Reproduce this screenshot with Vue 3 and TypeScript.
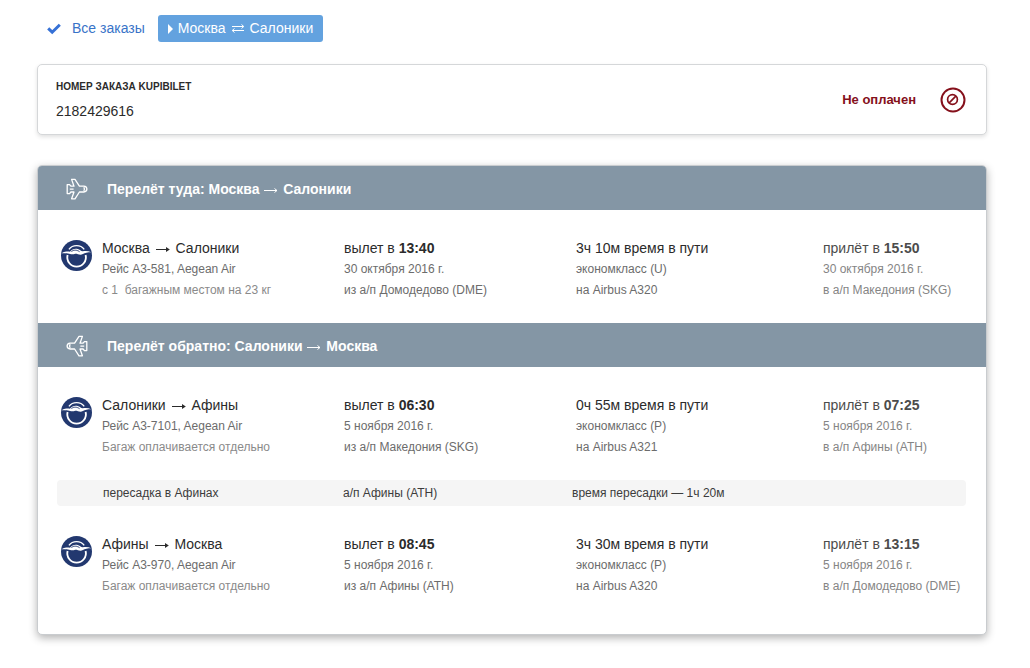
<script setup lang="ts">
interface Flight {
  from: string
  to: string
  code: string
  baggage: string
  departTime: string
  departDate: string
  departAirport: string
  duration: string
  cabin: string
  aircraft: string
  arriveTime: string
  arriveDate: string
  arriveAirport: string
  transfer?: { place: string; airport: string; time: string }
}

interface Trip {
  label: string
  from: string
  to: string
  back: boolean
  flights: Flight[]
}

const orderNumber = '2182429616'

const trips: Trip[] = [
  {
    label: 'Перелёт туда:',
    from: 'Москва',
    to: 'Салоники',
    back: false,
    flights: [
      {
        from: 'Москва',
        to: 'Салоники',
        code: 'A3-581',
        baggage: 'с 1\u00a0 багажным местом на 23 кг',
        departTime: '13:40',
        departDate: '30 октября 2016 г.',
        departAirport: 'Домодедово (DME)',
        duration: '3ч 10м',
        cabin: 'экономкласс (U)',
        aircraft: 'Airbus A320',
        arriveTime: '15:50',
        arriveDate: '30 октября 2016 г.',
        arriveAirport: 'Македония (SKG)',
      },
    ],
  },
  {
    label: 'Перелёт обратно:',
    from: 'Салоники',
    to: 'Москва',
    back: true,
    flights: [
      {
        from: 'Салоники',
        to: 'Афины',
        code: 'A3-7101',
        baggage: 'Багаж оплачивается отдельно',
        departTime: '06:30',
        departDate: '5 ноября 2016 г.',
        departAirport: 'Македония (SKG)',
        duration: '0ч 55м',
        cabin: 'экономкласс (P)',
        aircraft: 'Airbus A321',
        arriveTime: '07:25',
        arriveDate: '5 ноября 2016 г.',
        arriveAirport: 'Афины (ATH)',
        transfer: {
          place: 'пересадка в Афинах',
          airport: 'а/п Афины (ATH)',
          time: 'время пересадки — 1ч 20м',
        },
      },
      {
        from: 'Афины',
        to: 'Москва',
        code: 'A3-970',
        baggage: 'Багаж оплачивается отдельно',
        departTime: '08:45',
        departDate: '5 ноября 2016 г.',
        departAirport: 'Афины (ATH)',
        duration: '3ч 30м',
        cabin: 'экономкласс (P)',
        aircraft: 'Airbus A320',
        arriveTime: '13:15',
        arriveDate: '5 ноября 2016 г.',
        arriveAirport: 'Домодедово (DME)',
      },
    ],
  },
]
</script>

<template>
  <main class="page">
    <nav class="crumbs">
      <a class="all" href="#orders">
        <svg class="check" viewBox="0 0 14 12" aria-hidden="true">
          <path d="M1.2 5.4 5.2 9.2 12.8 1.8" />
        </svg>
        <span>Все заказы</span>
      </a>
      <a class="current" href="#order">
        <svg class="caret" viewBox="0 0 5 10" aria-hidden="true"><path d="M0 0 5 5 0 10z" /></svg>
        <span>Москва</span>
        <svg class="swap" viewBox="0 0 14 10" aria-hidden="true">
          <path d="M1 2.5H12.5M10.5 .5 12.8 2.5 10.5 4.5M13 6.5H1.5M3.5 4.5 1.2 6.5 3.5 8.5" />
        </svg>
        <span>Салоники</span>
      </a>
    </nav>

    <section class="card order">
      <div class="order-info">
        <h1>НОМЕР ЗАКАЗА KUPIBILET</h1>
        <p>{{ orderNumber }}</p>
      </div>
      <strong class="status">Не оплачен</strong>
      <svg class="ban" viewBox="0 0 26 26" aria-hidden="true">
        <circle cx="13" cy="13" r="11.5" stroke-width="2" />
        <circle cx="12.5" cy="12.5" r="4.9" stroke-width="1.7" />
        <path d="M9.2 15.8 15.8 9.2" stroke-width="1.7" />
      </svg>
    </section>

    <article class="card trips">
      <section v-for="trip in trips" :key="trip.label" class="trip">
        <header class="trip-head">
          <svg class="plane" :class="{ back: trip.back }" viewBox="0 0 22 22" aria-hidden="true">
            <path
              d="M1.2 6.6H3.6L4.9 8.2H8L5.6 1.4H9L13.4 8.2H17.8C19.8 8.4 20.9 9.8 20.9 11.1S19.8 13.8 17.8 14H13.4L9 20.8H5.6L8 14H4.9L3.6 15.6H1.2V6.6ZM17.6 9.4C18.7 10.2 18.7 12 17.6 12.8M3.8 11.1H7.6"
            />
          </svg>
          <h2>
            {{ trip.label }} {{ trip.from }}
            <svg class="arrow head-arrow" viewBox="0 0 14 8" aria-hidden="true">
              <path d="M0 4.5H13M10.5 2.5 13 4.5 10.5 6.5" />
            </svg>
            {{ trip.to }}
          </h2>
        </header>

        <template v-for="flight in trip.flights" :key="flight.code">
          <div class="flight">
            <svg class="logo" viewBox="0 0 32 32" aria-hidden="true">
              <circle class="disc" cx="16" cy="16" r="16" />
              <path class="ring" d="M6.8 15.5A9.6 9.6 0 1 0 25.4 15.5" />
              <path class="ring top" d="M8.2 9.6C12 4.6 20.2 4.6 24 9.6" />
              <path
                class="wing"
                d="M0.6 13.6C4 11.8 7 11.9 9.2 12.1 11.4 9.2 14.6 8.4 17.2 9.2 19.2 9.8 20.6 11.2 22.4 11.6 25.6 10.9 28.4 11.2 31.2 12.6 27.4 12.7 24.8 13 22.6 14.4 19.6 16.3 16.8 13.8 14 14.4 10.6 15.4 8.6 13.2 0.6 13.6Z"
              />
              <path class="cut" d="M10.8 11.9C13.4 9.9 16.6 10.2 19.2 12.1" />
            </svg>
            <div class="col">
              <h3>
                {{ flight.from }}
                <svg class="arrow" viewBox="0 0 14 8" aria-hidden="true">
                  <path d="M0 4.5H12" />
                  <path class="tip" d="M10 2 13.8 4.5 10 7z" />
                </svg>
                {{ flight.to }}
              </h3>
              <p>Рейс {{ flight.code }}, Aegean Air</p>
              <p class="light">{{ flight.baggage }}</p>
            </div>
            <div class="col">
              <h3>вылет в <b>{{ flight.departTime }}</b></h3>
              <p>{{ flight.departDate }}</p>
              <p>из а/п {{ flight.departAirport }}</p>
            </div>
            <div class="col">
              <h3>{{ flight.duration }} время в пути</h3>
              <p>{{ flight.cabin }}</p>
              <p>на {{ flight.aircraft }}</p>
            </div>
            <div class="col arrival">
              <h3>прилёт в <b>{{ flight.arriveTime }}</b></h3>
              <p>{{ flight.arriveDate }}</p>
              <p>в а/п {{ flight.arriveAirport }}</p>
            </div>
          </div>
          <div v-if="flight.transfer" class="transfer">
            <span>{{ flight.transfer.place }}</span>
            <span>{{ flight.transfer.airport }}</span>
            <span>{{ flight.transfer.time }}</span>
          </div>
        </template>
      </section>
    </article>
  </main>
</template>

<style>
body {
  background: #fff;
}
</style>

<style scoped>
.page {
  box-sizing: border-box;
  padding: 15px 43px 32px 37px;
  font-family: "Liberation Sans", Arial, sans-serif;
  font-size: 14px;
  color: #2b2b2b;
}

h1,
h2,
h3,
p {
  margin: 0;
}

svg {
  fill: none;
  flex: none;
}

.crumbs {
  display: flex;
  align-items: center;
  gap: 13px;
  padding-left: 10px;
}

.crumbs a {
  display: flex;
  align-items: center;
  line-height: 27px;
  text-decoration: none;
}

.all {
  gap: 11px;
  color: #3873c8;
}

.check {
  width: 14px;
  height: 12px;
  stroke: #3671d6;
  stroke-width: 3;
}

.current {
  gap: 5px;
  padding: 0 10px;
  border-radius: 3px;
  background: #63a2df;
  color: #fff;
}

.caret {
  width: 5px;
  height: 10px;
  fill: #fff;
}

.swap {
  width: 14px;
  height: 10px;
  stroke: #fff;
}

.card {
  border: 1px solid #d5d7d9;
  border-radius: 5px;
  background: #fff;
}

.order {
  display: flex;
  align-items: center;
  margin-top: 22px;
  padding: 12px 20px 12px 18px;
  box-shadow: 0 2px 4px rgba(0, 0, 0, 0.12);
}

.order-info {
  flex: 1;
}

.order-info h1 {
  font-size: 10px;
  line-height: 20px;
}

.order-info p {
  padding-top: 3px;
  line-height: 22px;
}

.status {
  margin-right: 24px;
  font-size: 13px;
  font-weight: 700;
  color: #85101b;
}

.ban {
  width: 26px;
  height: 26px;
  stroke: #85101b;
}

.trips {
  margin-top: 30px;
  padding-bottom: 15px;
  border-color: #c9cccf;
  box-shadow: 0 3px 8px rgba(0, 0, 0, 0.3);
}

.trip-head {
  display: flex;
  align-items: center;
  gap: 19px;
  height: 44px;
  padding: 2px 28px 0;
  box-sizing: border-box;
  background: #8496a5;
  color: #fff;
}

.trip:first-child .trip-head {
  border-radius: 4px 4px 0 0;
}

.trip-head h2 {
  font-size: 14px;
  line-height: 20px;
}

.plane {
  width: 22px;
  height: 22px;
  stroke: #fff;
  stroke-width: 1.3;
  stroke-linejoin: round;
}

.plane.back {
  transform: scaleX(-1);
}

.arrow {
  width: 14px;
  height: 8px;
  margin: 0 2px;
  stroke: #2b2b2b;
}

.arrow .tip {
  fill: #2b2b2b;
  stroke: none;
}

.head-arrow {
  margin: 0 1px;
  stroke: #fff;
}

.flight {
  display: grid;
  grid-template-columns: 41px 242fr 232fr 247fr 143fr;
  padding: 28px 20px 22px 23px;
}

.logo {
  width: 31px;
  height: 31px;
  margin-top: 2px;
}

.disc {
  fill: #22386f;
}

.ring {
  stroke: #fff;
  stroke-width: 1.9;
}

.ring.top {
  stroke-width: 1.4;
}

.wing {
  fill: #fff;
}

.cut {
  stroke: #22386f;
}

.col {
  white-space: nowrap;
  line-height: 21px;
}

.col h3 {
  font-size: 14px;
  font-weight: 400;
}

.col p {
  font-size: 12px;
  color: #6c6c6c;
}

.col .light {
  color: #8a8a8a;
}

.arrival h3 {
  color: #4c4c4c;
}

.arrival p {
  color: #858585;
}

.transfer {
  display: grid;
  grid-template-columns: 240fr 229fr 394fr;
  margin: 0 20px 0 19px;
  padding-left: 46px;
  border-radius: 4px;
  background: #f5f5f5;
  font-size: 12px;
  line-height: 26px;
  color: #3c3c3c;
}
</style>
